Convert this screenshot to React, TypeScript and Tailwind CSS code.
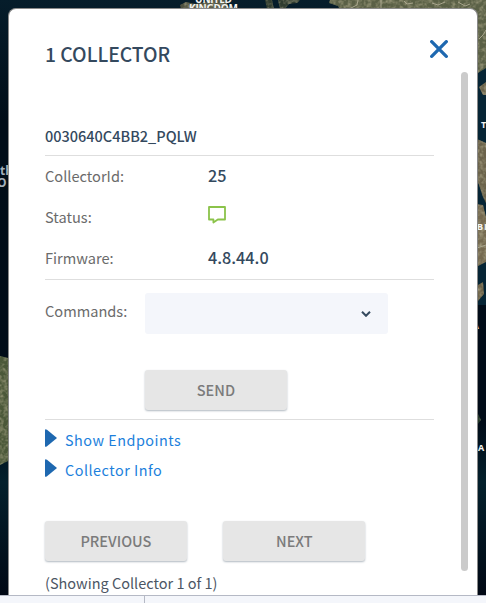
import type { ReactNode } from "react";

function MapBackdrop() {
  return (
    <svg
      className="absolute inset-0 h-[603px] w-[486px]"
      viewBox="0 0 486 603"
      fontFamily="'Open Sans', 'Noto Sans', sans-serif"
    >
      <defs>
        <linearGradient id="sea" x1="0" y1="0" x2="0" y2="1">
          <stop offset="0" stopColor="#061d2b" />
          <stop offset="0.2" stopColor="#010d18" />
          <stop offset="0.7" stopColor="#010c18" />
          <stop offset="0.8" stopColor="#04202c" />
          <stop offset="1" stopColor="#010713" />
        </linearGradient>
        <filter id="terrain" x="0" y="0" width="1" height="1" colorInterpolationFilters="sRGB">
          <feTurbulence type="fractalNoise" baseFrequency="0.25" numOctaves="3" seed="4" />
          <feColorMatrix values="0 0 0 0 0.7  0 0 0 0 0.68  0 0 0 0 0.56  1.4 0 0 0 -0.55" />
          <feComposite in2="SourceGraphic" operator="in" result="n" />
          <feMerge>
            <feMergeNode in="SourceGraphic" />
            <feMergeNode in="n" />
          </feMerge>
        </filter>
      </defs>
      <rect width="486" height="603" fill="url(#sea)" />
      <rect x="476" y="65" width="10" height="240" fill="#062535" />
      <g filter="url(#terrain)">
        <path d="M180 5l6-3 10 2 16-4h14l3 9h-48z" fill="#4e5140" />
        <path d="M265 0l2-0h5l2 9h-7zM278 0h22l-3 3-8 1-4 5h-5z" fill="#303c30" />
        <path d="M330 0h156v68l-8 5-3-60-135-3-2-4-9-3z" fill="#5a6046" />
        <path d="M486 82l-7 5 4 8h3zM477 139l9 4v60l-3-6-4-12-3-7z" fill="#6b634b" />
        <path d="M476 204l7 1 3 12v45l-10 5z" fill="#756a50" />
        <path d="M478 285l5-3 1 12-6 7z" fill="#6e644a" />
        <path d="M0 356l8 2v103l-8 4z" fill="#4b5839" />
        <path d="M477 412l4 8-4 5z" fill="#243a2a" />
      </g>
      <path d="M358 0l-1 5-8 4M381 0v9M404 1l3 3 6-1M432 3l6 2 7-3M458 2l7 4 5-2M479 39l4-4 3-5M477 248l9-3" fill="none" stroke="#a8a58d" />
      <g fill="#f4f4f2" fontSize="10" fontWeight="700">
        <text x="195" y="2.5" textLength="37">UNITED</text>
        <text x="189" y="12" textLength="49">KINGDOM</text>
        <text x="481" y="128" fontSize="9">T</text>
        <text x="477" y="230" fontSize="9">B</text>
        <text x="484" y="230" fontSize="9">I</text>
        <text x="478" y="451" fontSize="9">A</text>
        <text x="474" y="329" fontSize="7">A</text>
      </g>
      <g fill="#a4b0bb" fontSize="12" fontWeight="700">
        <text x="0" y="175">th</text>
        <text x="-3" y="187">O</text>
      </g>
    </svg>
  );
}

function Row({ label, children }: { label: string; children: ReactNode }) {
  return (
    <div className="flex h-[41px] items-center">
      <span className="w-[163px] text-[14.6px] text-[#6b6b6b]">{label}</span>
      <span className="pb-[2px] text-[16.2px] font-medium text-[#34495e]">{children}</span>
    </div>
  );
}

function PanelButton({ children }: { children: ReactNode }) {
  return (
    <button className="h-[40px] w-[142.4px] rounded-[3px] bg-[#e6e6e6] text-[14.5px] font-medium text-[#7b7b7b] shadow-[0_1px_2px_rgba(60,80,100,0.4)]">
      {children}
    </button>
  );
}

function Disclosure({ children }: { children: ReactNode }) {
  return (
    <div className="flex h-[30px] items-center">
      <svg className="mb-[5px] mr-[8px] h-[18px] w-[12px]" viewBox="0 0 12 18">
        <path d="M0 1.2Q0 0 1.2.4L2 .8 12 9 2 17.2Q0 18.6 0 17z" fill="#1e68b0" />
      </svg>
      <span className="text-[14.4px] tracking-[0.5px] text-[#1c7fdc]">{children}</span>
    </div>
  );
}

export default function App() {
  return (
    <div className="relative flex h-[603px] w-[486px] flex-col overflow-hidden bg-[#010d18] font-['Noto_Sans_CJK_SC','Source_Sans_Pro',sans-serif] leading-none whitespace-nowrap">
      <MapBackdrop />
      <main className="relative ml-[8px] mt-[8px] flex h-[587px] w-[470px] shrink-0 justify-between rounded-t-[8px] border border-b-0 border-[#898989] bg-white pl-[36px] pr-[9px]">
        <div className="w-[389px] shrink-0">
          <h1 className="pt-[35px] text-[19.3px] leading-[20px] font-medium text-[#34495e]">1 COLLECTOR</h1>
          <h2 className="mt-[62px] h-[30px] border-b border-[#dedede] pt-[2px] text-[14.5px] leading-[16px] font-medium text-[#34495e]">
            0030640C4BB2_PQLW
          </h2>
          <section className="h-[124px] border-b border-[#dedede]">
            <Row label="CollectorId:">25</Row>
            <Row label="Status:">
              <svg className="mb-[4px] h-[18px] w-[18px]" viewBox="0 0 18 18" fill="none" stroke="#8bc34a" strokeWidth="1.8" strokeLinejoin="round">
                <path d="M1 1h16v12.5H9.8L5.4 16.5V13.5H1z" />
              </svg>
            </Row>
            <Row label="Firmware:">4.8.44.0</Row>
          </section>
          <section className="h-[140px] border-b border-[#dedede] pt-[13px]">
            <div className="flex h-[41px]">
              <span className="w-[100px] pt-[11px] text-[14.6px] text-[#6b6b6b]">Commands:</span>
              <div className="flex w-[243px] items-center justify-end rounded-[3px] bg-[#f4f6fb] pr-[17px]">
                <svg className="h-[6px] w-[10px]" viewBox="0 0 10 6" fill="none" stroke="#34495e" strokeWidth="2">
                  <path d="M1 .8l4 4 4-4" />
                </svg>
              </div>
            </div>
            <div className="ml-[99.7px] mt-[36px]">
              <PanelButton>SEND</PanelButton>
            </div>
          </section>
          <nav className="pt-[5px]">
            <Disclosure>Show Endpoints</Disclosure>
            <Disclosure>Collector Info</Disclosure>
          </nav>
          <div className="-ml-[0.3px] mt-[36px] flex gap-[36px]">
            <PanelButton>PREVIOUS</PanelButton>
            <PanelButton>NEXT</PanelButton>
          </div>
          <p className="mt-[15px] text-[14.5px] text-[#4c5664]">(Showing Collector 1 of 1)</p>
        </div>
        <aside className="flex shrink-0 flex-col items-end">
          <button aria-label="Close" className="mr-[20px] -ml-[20px] mt-[31px]">
            <svg className="h-[18px] w-[18px]" viewBox="0 0 18 18" fill="none" stroke="#1e68b0" strokeWidth="3.3" strokeLinecap="round">
              <path d="M1.7 1.7l14.6 14.6M16.3 1.7l-14.6 14.6" />
            </svg>
          </button>
          <div className="mt-[14px] h-[499px] w-[7px] rounded-full bg-[#cbcbcb]" />
        </aside>
      </main>
      <footer className="relative flex h-[8px] shrink-0 border-t border-[#b5b9c5] bg-[#f4f6fb]">
        <div className="w-[145px] border-r border-[#b5b9c5]" />
      </footer>
    </div>
  );
}
